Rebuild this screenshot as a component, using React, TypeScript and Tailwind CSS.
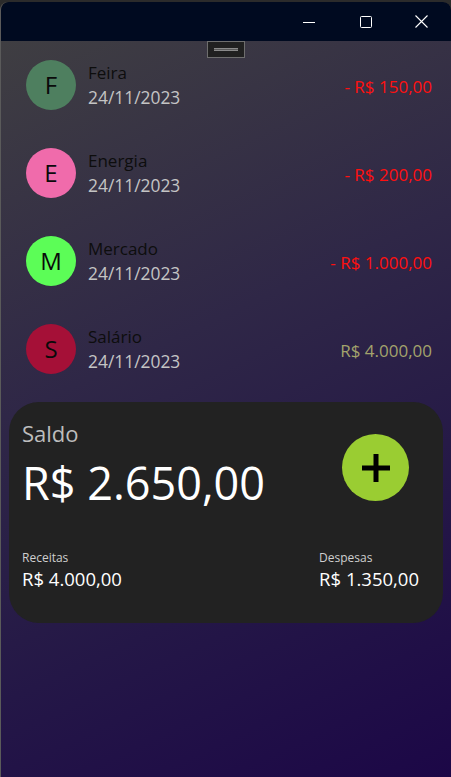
import React from "react";

type Item = {
  letter: string;
  name: string;
  date: string;
  amount: string;
  circle: string;
  amountColor: string;
};

const items: Item[] = [
  { letter: "F", name: "Feira", date: "24/11/2023", amount: "- R$ 150,00", circle: "bg-[#4e7f5f]", amountColor: "text-[#ff1010]" },
  { letter: "E", name: "Energia", date: "24/11/2023", amount: "- R$ 200,00", circle: "bg-[#f06bab]", amountColor: "text-[#ff1010]" },
  { letter: "M", name: "Mercado", date: "24/11/2023", amount: "- R$ 1.000,00", circle: "bg-[#5cfd57]", amountColor: "text-[#ff1010]" },
  { letter: "S", name: "Salário", date: "24/11/2023", amount: "R$ 4.000,00", circle: "bg-[#a51037]", amountColor: "text-[#a3a36c]" },
];

function TitleBar() {
  return (
    <div className="flex h-[39px] items-center justify-end rounded-t-[8px] bg-[#000a20] text-white">
      <button type="button" className="flex h-full w-[57px] items-center justify-center">
        <svg width="12" height="12" viewBox="0 0 12 12">
          <line x1="0" y1="6.5" x2="12" y2="6.5" stroke="white" strokeWidth="1" />
        </svg>
      </button>
      <button type="button" className="flex h-full w-[57px] items-center justify-center">
        <svg width="12" height="12" viewBox="0 0 12 12">
          <rect x="0.5" y="0.5" width="11" height="11" rx="1" fill="none" stroke="white" strokeWidth="1" />
        </svg>
      </button>
      <button type="button" className="flex h-full w-[57px] items-center justify-center pr-[2px]">
        <svg width="13" height="13" viewBox="0 0 13 13">
          <path d="M0.5 0.5 L12.5 12.5 M12.5 0.5 L0.5 12.5" stroke="white" strokeWidth="1.1" />
        </svg>
      </button>
    </div>
  );
}

function Row({ item }: { item: Item }) {
  return (
    <div className="flex h-[50px] items-center">
      <div className={`flex h-[50px] w-[50px] shrink-0 items-center justify-center rounded-full ${item.circle}`}>
        <span className="text-[24px] leading-none text-[#0a0a0a]">{item.letter}</span>
      </div>
      <div className="ml-[12px] flex flex-col">
        <span className="text-[17px] leading-[24px] text-[#0d0d0d]">{item.name}</span>
        <span className="text-[17.4px] leading-[24px] text-[#c4c4c4]">{item.date}</span>
      </div>
      <span className={`ml-auto mt-[3px] text-[17px] ${item.amountColor}`}>{item.amount}</span>
    </div>
  );
}

export default function App() {
  return (
    <div
      className="h-[777px] w-[451px] overflow-hidden bg-[#2b2b2b]"
      style={{ fontFamily: '"Open Sans", "Noto Sans", sans-serif' }}
    >
      <div className="mt-[2px] flex h-[775px] flex-col overflow-hidden rounded-t-[8px] border-l border-[#5a5a5a]">
        <TitleBar />
        <div className="flex flex-1 flex-col bg-[linear-gradient(155deg,#3f3e42_0%,#2f2747_40%,#241747_70%,#1c0747_100%)]">
          <div className="flex justify-center">
            <div className="flex h-[17px] w-[38px] items-center justify-center border border-[#6e6e6e] bg-[#202020]">
              <div className="h-[3px] w-[24px] border-y border-[#8a8a8a] bg-[#5a5a5a]" />
            </div>
          </div>
          <div className="mt-[2px] flex flex-col gap-[38px] pl-[25px] pr-[19px]">
            {items.map((item) => (
              <Row key={item.letter} item={item} />
            ))}
          </div>
          <div className="ml-[8px] mr-[8px] mt-[28px] flex h-[221px] flex-col rounded-[30px] bg-[#222222] pb-[32px] pl-[13px] pr-[34px] pt-[16px]">
            <div className="flex items-start justify-between">
              <div className="flex flex-col">
                <span className="text-[22px] leading-[30px] text-[#bdbdbd]">Saldo</span>
                <span className="mt-[7px] text-[45px] leading-[56px] text-white">R$ 2.650,00</span>
              </div>
              <button
                type="button"
                className="mt-[16px] flex h-[67px] w-[67px] items-center justify-center rounded-full bg-[#9acd32]"
              >
                <svg width="32" height="32" viewBox="0 0 32 32">
                  <path d="M16 2 V30 M2 16 H30" stroke="black" strokeWidth="5" />
                </svg>
              </button>
            </div>
            <div className="mt-auto flex justify-between">
              <div className="flex flex-col">
                <span className="text-[12px] leading-[16px] text-[#cfcfcf]">Receitas</span>
                <span className="text-[18.5px] leading-[25px] text-white">R$ 4.000,00</span>
              </div>
              <div className="mr-[-10px] flex flex-col">
                <span className="text-[12px] leading-[16px] text-[#cfcfcf]">Despesas</span>
                <span className="text-[18.5px] leading-[25px] text-white">R$ 1.350,00</span>
              </div>
            </div>
          </div>
        </div>
      </div>
    </div>
  );
}
